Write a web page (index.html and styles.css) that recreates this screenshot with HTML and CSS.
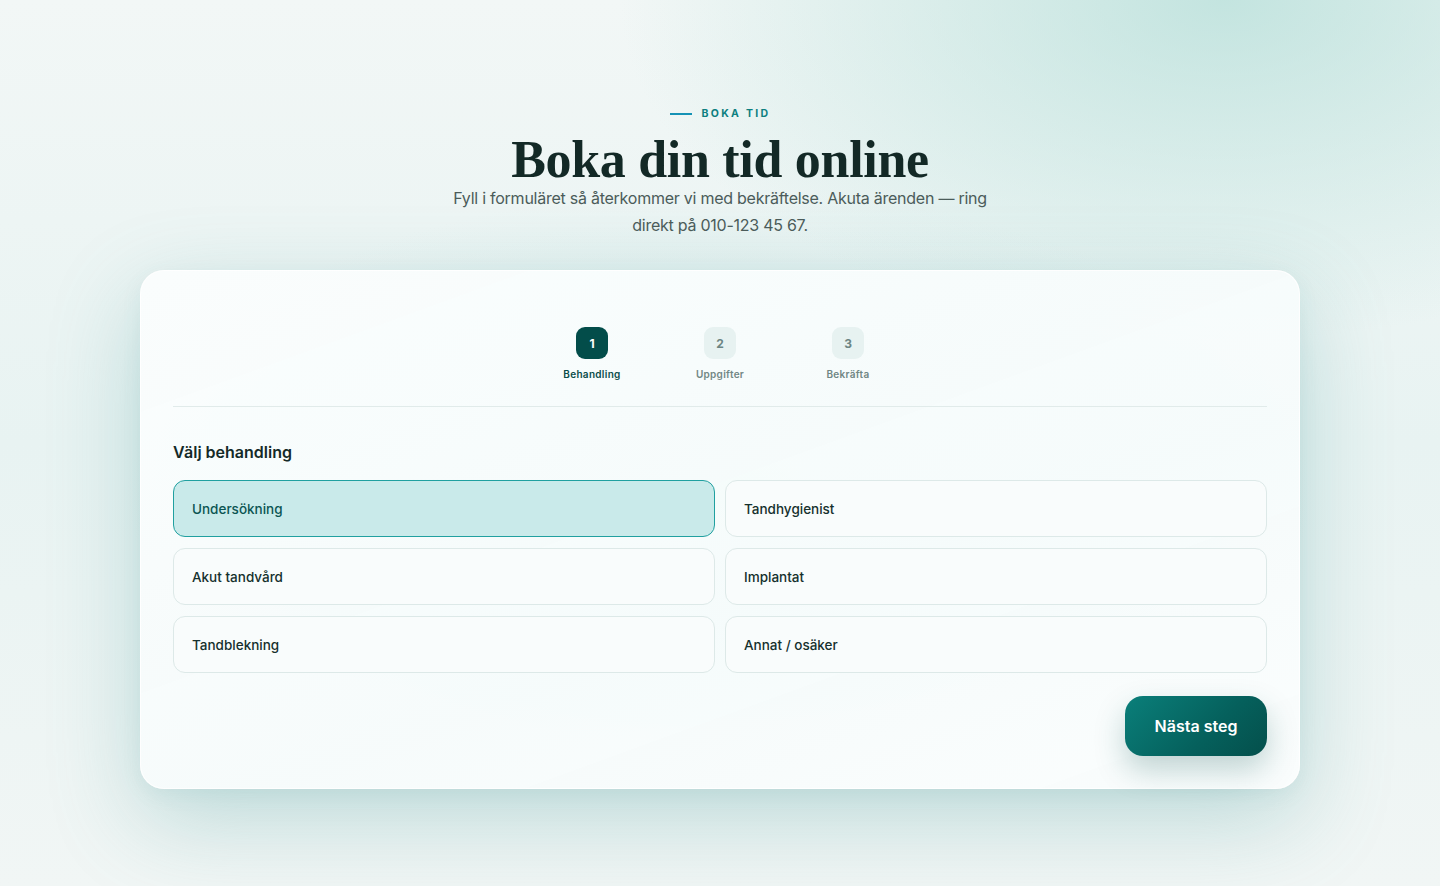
FILE: index.html
```html
<!DOCTYPE html>
<html lang="sv">
<head>
    <meta charset="UTF-8">
    <title>Boka tid</title>
    <link rel="stylesheet" href="styles.css">
</head>
<body>
    <header class="intro">
        <p class="eyebrow"><span class="eyebrow-line"></span>Boka tid</p>
        <h1>Boka din tid online</h1>
        <p class="lead">Fyll i formuläret så återkommer vi med bekräftelse. Akuta ärenden — ring direkt på 010-123 45 67.</p>
    </header>

    <main class="card">
        <ol class="steps">
            <li class="step active"><span class="step-num">1</span><span class="step-label">Behandling</span></li>
            <li class="step"><span class="step-num">2</span><span class="step-label">Uppgifter</span></li>
            <li class="step"><span class="step-num">3</span><span class="step-label">Bekräfta</span></li>
        </ol>

        <section class="treatments">
            <h2>Välj behandling</h2>
            <div class="options">
                <button class="option selected" type="button">Undersökning</button>
                <button class="option" type="button">Tandhygienist</button>
                <button class="option" type="button">Akut tandvård</button>
                <button class="option" type="button">Implantat</button>
                <button class="option" type="button">Tandblekning</button>
                <button class="option" type="button">Annat / osäker</button>
            </div>
        </section>

        <div class="actions">
            <button class="next" type="button">Nästa steg</button>
        </div>
    </main>
</body>
</html>
```

FILE: styles.css
```css
* {
    box-sizing: border-box;
}

html {
    min-height: 100%;
}

body {
    margin: 0;
    min-height: 886px;
    font-family: Inter, "Noto Sans", sans-serif;
    color: #14302e;
    background:
        radial-gradient(ellipse 60% 55% at 85% 0%, rgba(180, 222, 216, 0.75), rgba(180, 222, 216, 0) 70%),
        radial-gradient(ellipse 55% 45% at 50% 55%, rgba(190, 226, 224, 0.6), rgba(190, 226, 224, 0) 75%),
        linear-gradient(180deg, #f2f7f6 0%, #e8f3f2 50%, #f1f6f5 100%);
    padding-top: 107px;
    padding-bottom: 97px;
}

.intro {
    text-align: center;
}

.eyebrow {
    margin: 0;
    display: flex;
    align-items: center;
    justify-content: center;
    gap: 10px;
    font-size: 10.5px;
    font-weight: 700;
    letter-spacing: 0.22em;
    text-transform: uppercase;
    color: #0d7f80;
    line-height: 14px;
}

.eyebrow-line {
    display: inline-block;
    width: 22px;
    height: 2px;
    background: #1592b5;
}

h1 {
    margin: 14px 0 0;
    font-family: "Liberation Serif", "DejaVu Serif", serif;
    font-size: 52px;
    font-weight: 700;
    line-height: 50px;
    letter-spacing: -0.3px;
    color: #132926;
}

.lead {
    margin: 0 auto;
    max-width: 545px;
    font-size: 16px;
    line-height: 27px;
    letter-spacing: -0.25px;
    color: #4b5c5a;
}

.card {
    width: 1160px;
    margin: 31px auto 0;
    padding: 56px 32px 32px;
    background: linear-gradient(160deg, rgba(250, 253, 253, 0.97), rgba(246, 251, 251, 0.96) 60%, rgba(250, 253, 253, 0.97));
    border: 1px solid rgba(255, 255, 255, 0.9);
    border-radius: 24px;
    box-shadow: 0 30px 90px rgba(80, 160, 158, 0.32), 0 6px 20px rgba(80, 150, 150, 0.08);
}

.steps {
    list-style: none;
    margin: 0;
    padding: 0 0 26px;
    display: flex;
    justify-content: center;
    gap: 32px;
    border-bottom: 1px solid #e1ebea;
}

.step {
    width: 96px;
    display: flex;
    flex-direction: column;
    align-items: center;
    gap: 9px;
}

.step-num {
    width: 32px;
    height: 32px;
    border-radius: 9px;
    display: flex;
    align-items: center;
    justify-content: center;
    font-size: 12px;
    font-weight: 700;
    background: #e7f2f1;
    color: #6c8583;
}

.step-label {
    font-size: 10px;
    font-weight: 600;
    letter-spacing: 0.03em;
    color: #718784;
}

.step.active .step-num {
    background: #034d4a;
    color: #ffffff;
}

.step.active .step-label {
    color: #0a4d4a;
}

.treatments h2 {
    margin: 35px 0 18px;
    font-size: 16px;
    font-weight: 600;
    line-height: 20px;
    color: #142a28;
}

.options {
    display: grid;
    grid-template-columns: 1fr 1fr;
    column-gap: 10px;
    row-gap: 11px;
}

.option {
    height: 57px;
    padding: 0 18px;
    text-align: left;
    font-family: inherit;
    font-size: 13.5px;
    font-weight: 500;
    color: #15302d;
    background: #f9fcfc;
    border: 1px solid #dde9e8;
    border-radius: 12px;
    cursor: pointer;
}

.option.selected {
    background: #c9eaea;
    border-color: #20a0a0;
    color: #0c5553;
}

.actions {
    display: flex;
    justify-content: flex-end;
    margin-top: 23px;
}

.next {
    width: 142px;
    height: 60px;
    border: none;
    border-radius: 18px;
    background: linear-gradient(135deg, #0a7f7a 0%, #05605c 60%, #044f4b 100%);
    color: #ffffff;
    font-family: inherit;
    font-size: 16px;
    font-weight: 600;
    cursor: pointer;
    box-shadow: 0 14px 30px rgba(20, 90, 88, 0.25);
}
```
